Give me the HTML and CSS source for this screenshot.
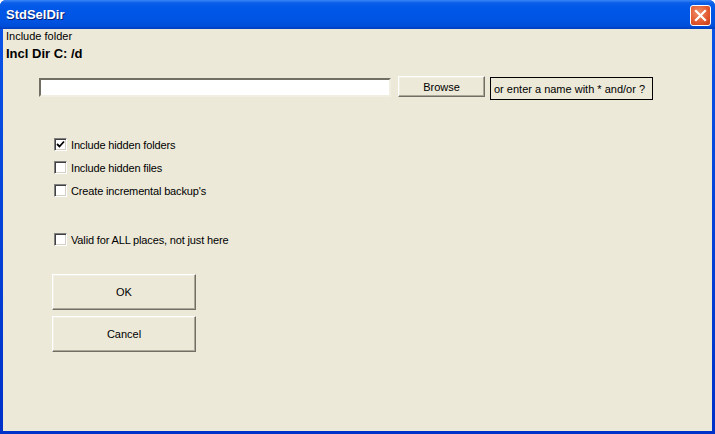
FILE: index.html
```html
<!DOCTYPE html>
<html>
<head>
<meta charset="utf-8">
<link rel="stylesheet" href="styles.css">
</head>
<body>
<div class="window">
  <div class="titlebar">
    <span class="title">StdSelDir</span>
    <span class="close"><svg width="13" height="13" viewBox="0 0 13 13"><path d="M2 2 L11 11 M11 2 L2 11" stroke="#fff" stroke-width="2.2" stroke-linecap="square"/></svg></span>
  </div>
  <div class="client">
    <div class="caption">Include folder</div>
    <div class="heading">Incl Dir C: /d</div>
    <div class="pathrow">
      <div class="input"></div>
      <div class="btn browse">Browse</div>
      <div class="hint">or enter a name with * and/or ?</div>
    </div>
    <div class="checks">
      <div class="check"><span class="box checked"><svg width="9" height="9" viewBox="0 0 9 9"><path d="M1 4 L3.5 6.5 L8 1.5" stroke="#000" stroke-width="1.8" fill="none"/></svg></span>Include hidden folders</div>
      <div class="check"><span class="box"></span>Include hidden files</div>
      <div class="check"><span class="box"></span>Create incremental backup's</div>
    </div>
    <div class="check valid"><span class="box"></span>Valid for ALL places, not just here</div>
    <div class="actions">
      <div class="btn big">OK</div>
      <div class="btn big">Cancel</div>
    </div>
  </div>
</div>
</body>
</html>
```

FILE: styles.css
```css
html, body { margin: 0; padding: 0; }
body { width: 715px; height: 434px; overflow: hidden; font-family: "Liberation Sans", Arial, sans-serif; }
.window {
  width: 715px; height: 434px; box-sizing: border-box;
  display: flex; flex-direction: column;
  padding: 0 3px 3px 3px;
  border-radius: 6px 6px 0 0;
  background: linear-gradient(#0a55e8, #0031c8);
}
.titlebar {
  height: 29px; flex: none; display: flex; align-items: center; justify-content: space-between;
  margin: 0 -3px; padding: 0 4px 0 6px;
  background: linear-gradient(#3a86f8 0px, #0a5ee8 3px, #0058e8 8px, #0054e3 20px, #004ed8 26px, #003dbf 29px);
  border-radius: 6px 6px 0 0;
}
.title { color: #fff; font-weight: bold; font-size: 13px; text-shadow: 1px 1px 0 #0a1e6e; }
.close {
  width: 19px; height: 19px; border: 1px solid #fff; border-radius: 3px;
  background: radial-gradient(circle at 40% 35%, #f0906a, #e2572e 60%, #c53a14);
  display: flex; align-items: center; justify-content: center; margin-top: 2px;
}
.client {
  flex: 1; background: #ece9d8; font-size: 11px; color: #000;
  padding: 1px 0 0 3px;
}
.caption { line-height: 13px; }
.heading { font-weight: bold; font-size: 13px; line-height: 15px; margin-top: 3px; }
.pathrow { display: flex; align-items: flex-start; margin: 15px 0 0 33px; }
.input {
  width: 352px; height: 19px; box-sizing: border-box; margin-top: 2px;
  background: #fff; border: 2px solid; border-color: #716f64 #f1efe2 #f1efe2 #716f64;
}
.btn {
  box-sizing: border-box; background: #ece9d8; display: flex; align-items: center; justify-content: center;
  border: 1px solid; border-color: #fff #716f64 #716f64 #fff;
  box-shadow: inset -1px -1px 0 #aca899, inset 1px 1px 0 #f1efe2;
}
.browse { width: 87px; height: 21px; margin-left: 7px; }
.hint {
  margin-left: 5px; margin-top: 1px; height: 23px; width: 163px; box-sizing: border-box;
  border: 1px solid #000; padding: 0 0 0 3px; display: flex; align-items: center;
}
.checks { margin: 38px 0 0 48px; display: flex; flex-direction: column; gap: 10px; }
.check { display: flex; align-items: center; height: 13px; letter-spacing: -0.15px; }
.valid { margin: 36px 0 0 48px; }
.box {
  width: 13px; height: 13px; box-sizing: border-box; margin-right: 4px; flex: none;
  background: #fff;
  border: 1px solid; border-color: #808080 #fff #fff #808080; box-shadow: inset 1px 1px 0 #404040, inset -1px -1px 0 #d4d0c8;
  display: flex; align-items: center; justify-content: center;
}
.actions { margin: 28px 0 0 46px; display: flex; flex-direction: column; gap: 6px; }
.big { width: 144px; height: 36px; font-size: 11px; }
```
